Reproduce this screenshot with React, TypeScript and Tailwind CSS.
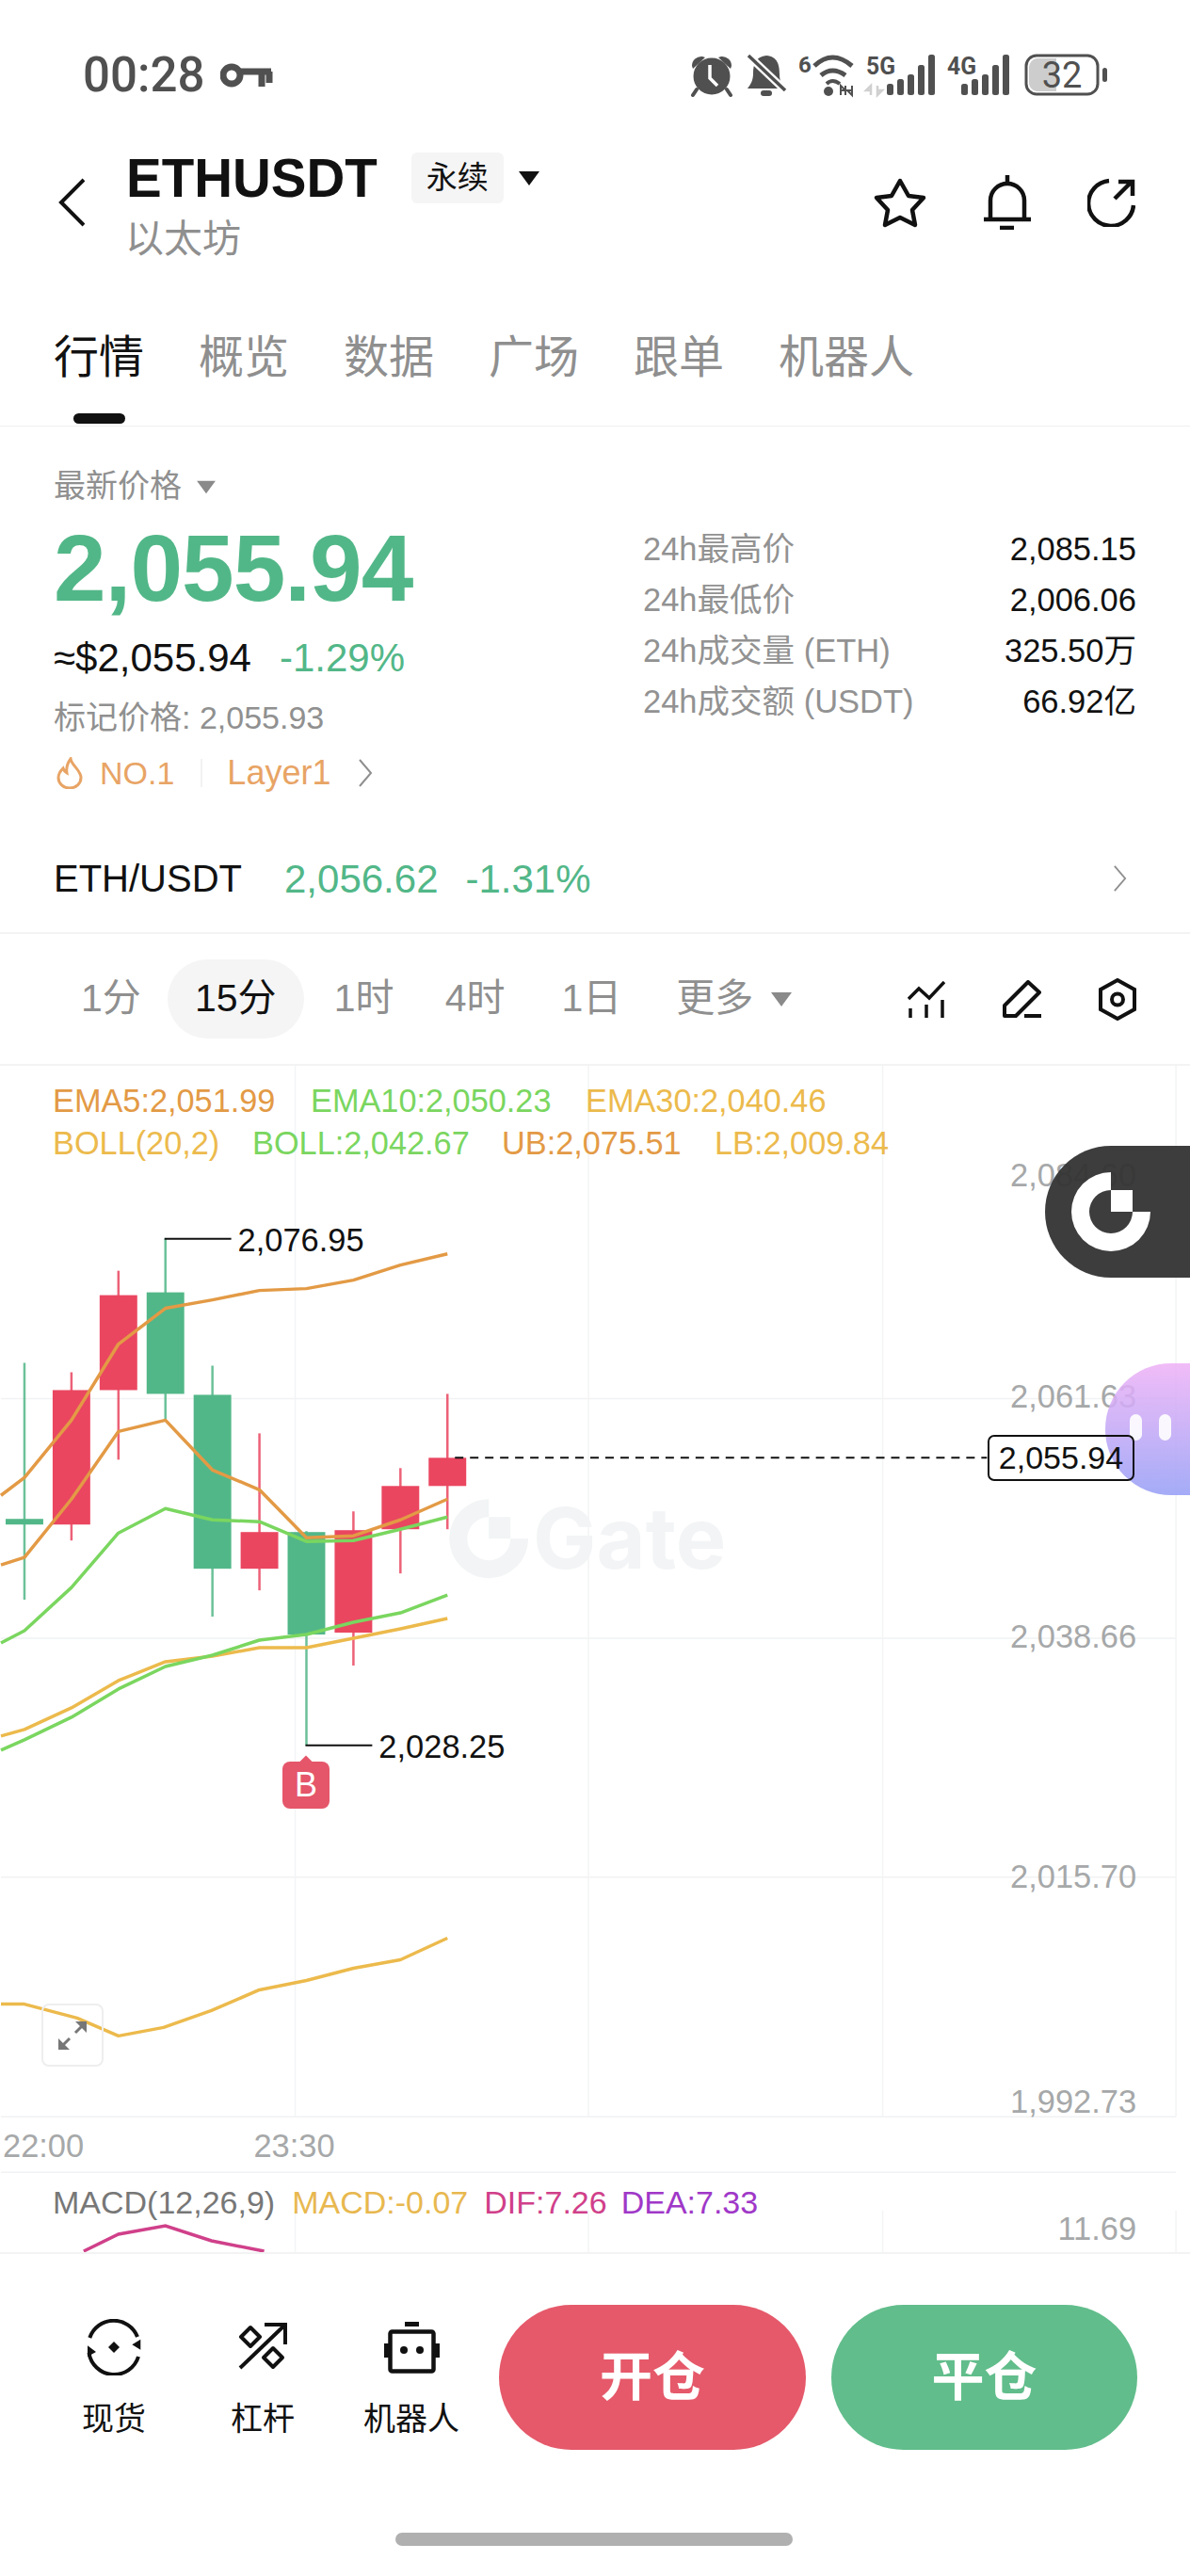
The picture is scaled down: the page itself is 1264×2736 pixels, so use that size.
import React from 'react';

const GREEN = '#52b788';
const RED = '#ea4660';
const ORANGE = '#e39a45';
const YELLOW = '#ecba4c';
const LIME = '#7ad65f';

// [cx, wickTop, wickBottom, bodyTop, bodyBottom, color]
const CANDLES: [number, number, number, number, number, string][] = [
  [25, 1448, 1700, 1614, 1620, GREEN],
  [75, 1458, 1637, 1477, 1620, RED],
  [125, 1350, 1551, 1376, 1477, RED],
  [175, 1316, 1509, 1373, 1481, GREEN],
  [225, 1451, 1718, 1482, 1667, GREEN],
  [275, 1523, 1690, 1628, 1667, RED],
  [325, 1627, 1855, 1628, 1737, GREEN],
  [375, 1606, 1770, 1626, 1735, RED],
  [425, 1560, 1672, 1579, 1625, RED],
  [475, 1481, 1625, 1549, 1579, RED],
];

const LINES: { color: string; points: string }[] = [
  { color: ORANGE, points: '0,1589 25,1570 75,1509 125,1428 175,1390 225,1381 275,1371 325,1369 375,1360 425,1344 475,1332' },
  { color: ORANGE, points: '0,1663 25,1655 75,1593 125,1521 175,1509 225,1562 275,1583 325,1634 375,1632 425,1615 475,1593' },
  { color: LIME, points: '0,1746 25,1733 75,1687 125,1629 175,1603 225,1615 275,1617 325,1638 375,1637 425,1625 475,1612' },
  { color: YELLOW, points: '0,1845 25,1838 75,1815 125,1786 175,1766 225,1760 275,1751 325,1751 375,1741 425,1731 475,1720' },
  { color: LIME, points: '0,1860 25,1849 75,1825 125,1795 175,1771 225,1759 275,1743 325,1737 375,1724 425,1714 475,1695' },
  { color: YELLOW, points: '0,2130 24,2130 81,2145 125,2164 173,2155 224,2137 275,2115 325,2105 375,2092 425,2083 475,2060' },
];

const Y_LABELS: [string, number][] = [
  ['2,084.60', 1248],
  ['2,061.63', 1484],
  ['2,038.66', 1739],
  ['2,015.70', 1994],
  ['1,992.73', 2234],
  ['11.69', 2369],
];

const BAR_SPOTS: [number, number][] = [[0, 90], [11, 85], [22, 80], [33, 70], [44, 59]];

const GateMark = ({ x, y, color }: { x: number; y: number; color: string }) => (
  <g transform={`translate(${x} ${y})`}>
    <path d="M0,-42 A42,42 0 1 0 42,0 H23 A23,23 0 1 1 0,-23 Z" fill={color} />
    <rect x="0" y="-23" width="23" height="23" fill={color} />
  </g>
);

const Chart = () => (
  <svg className="absolute inset-0 w-full h-full" viewBox="0 1132 1264 1262">
    {[1486, 1741, 1995, 2250].map((y) => (
      <line key={y} x1="0" x2="1250" y1={y} y2={y} stroke="#f1f2f3" strokeWidth="1.5" />
    ))}
    {[313, 625, 938, 1250].map((x) => (
      <React.Fragment key={x}>
        <line x1={x} x2={x} y1="1132" y2="2250" stroke="#f3f4f5" strokeWidth="1.5" />
        <line x1={x} x2={x} y1="2350" y2="2394" stroke="#f3f4f5" strokeWidth="1.5" />
      </React.Fragment>
    ))}
    <line x1="0" x2="1250" y1="2309" y2="2309" stroke="#f1f2f3" strokeWidth="1.5" />

    {/* watermark */}
    <GateMark x={519} y={1635} color="#f2f4f5" />
    <text x="566" y="1667" fontSize="90" fontWeight="700" fill="#f2f4f5" fontFamily="Inter">Gate</text>

    {CANDLES.map(([cx, wt, wb, bt, bb, color]) => (
      <g key={cx}>
        <line x1={cx} x2={cx} y1={wt} y2={wb} stroke={color} strokeWidth="2.5" opacity="0.85" />
        <rect x={cx - 20} y={bt} width="40" height={bb - bt} fill={color} />
      </g>
    ))}
    {LINES.map((l, i) => (
      <polyline key={i} points={l.points} fill="none" stroke={l.color} strokeWidth="3.5" strokeLinejoin="round" />
    ))}

    {/* high / low callouts */}
    <line x1="174" x2="245" y1="1316" y2="1316" stroke="#111" strokeWidth="2" />
    <text x="252" y="1329" fontSize="34.5" fill="#111">2,076.95</text>
    <line x1="324" x2="395" y1="1855" y2="1855" stroke="#111" strokeWidth="2" />
    <text x="402" y="1868" fontSize="34.5" fill="#111">2,028.25</text>

    {/* last price dashes */}
    <line x1="483" x2="1049" y1="1549" y2="1549" stroke="#111" strokeWidth="2" strokeDasharray="9 7" />

    {Y_LABELS.map(([t, y]) => (
      <text key={t} x="1208" y={y + 12} textAnchor="end" fontSize="34.5" fill="#a6a8a9">{t}</text>
    ))}
    <text x="2" y="2293" fontSize="34.5" fill="#a6a8a9">22:00</text>
    <text x="312" y="2293" textAnchor="middle" fontSize="34.5" fill="#a6a8a9">23:30</text>

    {/* MACD line, clipped by panel */}
    <polyline points="88,2393 125,2375 175,2366 224,2382 280,2393" fill="none" stroke="#d0408a" strokeWidth="3.5" />
  </svg>
);

const StatusIcons = () => (
  <svg width="450" height="50" viewBox="730 56 450 50" fill="#505050" className="shrink-0">
    {/* alarm */}
    <circle cx="757" cy="82" r="19.5" />
    <path d="M736 71 A10 10 0 0 1 747 61 L750 62 L737 74 Z M778 71 A10 10 0 0 0 767 61 L764 62 L777 74 Z" />
    <path d="M741 96 L737 102 M773 96 L777 102" stroke="#505050" strokeWidth="4" strokeLinecap="round" />
    <path d="M755 70 V84 L763 92" stroke="#fff" strokeWidth="3.5" fill="none" />
    {/* bell off */}
    <path d="M815 60 c12 1 14 10 14 20 c0 8 3 12 5 15 H795 c3 -4 6 -8 6 -16 c0 -10 3 -18 14 -19 Z" />
    <rect x="809" y="97" width="12" height="6" rx="3" />
    <path d="M796 60 L835 97" stroke="#fff" strokeWidth="8" />
    <path d="M796 60 L835 97" stroke="#505050" strokeWidth="3.5" />
    {/* wifi */}
    <text x="849" y="78" fontSize="24" fontWeight="700" fontFamily="Roboto">6</text>
    <path d="M866 71 Q885 53 906 71 M873 81 Q885 71 899 81" stroke="#505050" strokeWidth="5" fill="none" />
    <path d="M879 90 Q885 84 893 90" stroke="#505050" strokeWidth="4" fill="none" />
    <circle cx="881" cy="98" r="5" />
    <path d="M894 102 V92 L899 97 H895 M906 92 V102 L901 97 H905 M899 92 V102" stroke="#505050" strokeWidth="2" fill="none" />
    {/* 5G */}
    <text x="921" y="80" fontSize="26" fontWeight="700" fontFamily="Roboto" textLength="31" lengthAdjust="spacingAndGlyphs">5G</text>
    <path d="M926 102 V92 L921 97 H925 M933 92 V102 L938 97 H934" stroke="#d0d0d0" strokeWidth="2.5" fill="none" />
    {BAR_SPOTS.map(([dx, y]) => (
      <rect key={dx} x={943 + dx} y={y} width="7" height={102 - y} rx="2.5" />
    ))}
    {/* 4G */}
    <text x="1007" y="80" fontSize="26" fontWeight="700" fontFamily="Roboto" textLength="31" lengthAdjust="spacingAndGlyphs">4G</text>
    {BAR_SPOTS.map(([dx, y]) => (
      <rect key={dx} x={1022 + dx} y={y} width="7" height={102 - y} rx="2.5" />
    ))}
    {/* battery */}
    <rect x="1091" y="60" width="76" height="41" rx="11" fill="#fff" stroke="#505050" strokeWidth="3" />
    <path d="M1094 72 A10 10 0 0 1 1102 63 H1123 V98 H1102 A10 10 0 0 1 1094 90 Z" fill="#cdcdcd" />
    <text x="1129" y="94" fontSize="38" textAnchor="middle" fontFamily="Roboto" fill="#505050">32</text>
    <rect x="1172" y="73" width="5" height="15" rx="2.5" />
  </svg>
);

const StarIcon = () => (
  <svg width="58" height="55" viewBox="0 0 58 55" fill="none" stroke="#111" strokeWidth="4.5" strokeLinejoin="round">
    <path d="M29 4 L38 20 L54 22 L42 35 L45 51 L29 43 L13 51 L16 35 L4 22 L20 20 Z" />
  </svg>
);
const BellIcon = () => (
  <svg width="50" height="58" viewBox="0 0 50 58" fill="none" stroke="#111" strokeWidth="4.5">
    <path d="M7 47 V27 A18 18 0 0 1 43 27 V47" />
    <path d="M25 0 V9" />
    <path d="M0 47 H50" />
    <path d="M17 56 H32" />
  </svg>
);
const ShareIcon = () => (
  <svg width="51" height="52" viewBox="0 0 51 52" fill="none" stroke="#111" strokeWidth="4.5">
    <path d="M23 3 A24 24 0 1 0 49 29" />
    <path d="M29 22 L47 4 M33 4 H48 V19" />
  </svg>
);

const Triangle = ({ className }: { className: string }) => (
  <span className={`inline-block w-0 h-0 border-l-[11px] border-r-[11px] border-t-[15px] border-l-transparent border-r-transparent ${className}`} />
);

const Chevron = ({ w, h, color }: { w: number; h: number; color: string }) => (
  <svg width={w} height={h} viewBox="0 0 16 32" fill="none" stroke={color} strokeWidth="2">
    <path d="M2 2 L14 16 L2 30" />
  </svg>
);

const Stat = ({ label, value }: { label: string; value: string }) => (
  <div className="flex justify-between items-center h-[54px] text-[34.5px]">
    <span className="text-[#929292]">{label}</span>
    <span className="text-[#111]">{value}</span>
  </div>
);

const BottomIcon = ({ label, children }: { label: string; children: React.ReactNode }) => (
  <div className="w-[158px] flex flex-col items-center">
    <div className="h-[70px] mt-[10px] flex items-center justify-center">{children}</div>
    <span className="mt-[18px] text-[34px] leading-[46px] text-[#111]">{label}</span>
  </div>
);

export default function App() {
  return (
    <div className="w-[1264px] h-[2736px] bg-white overflow-hidden flex flex-col text-[#111] [font-family:'Liberation_Sans','Noto_Sans_CJK_SC',sans-serif]">
      {/* Status bar */}
      <div className="h-[160px] shrink-0 flex items-center pl-[88px] pr-[85px] justify-between">
        <div className="flex items-center text-[#505050]">
          <span className="text-[51px] font-medium [font-family:Roboto,sans-serif]">00:28</span>
          <svg width="56" height="32" viewBox="0 0 56 32" fill="none" stroke="#505050" strokeWidth="7" className="ml-[17px]">
            <circle cx="12" cy="16" r="9" />
            <path d="M21 12 H54 M44 12 V28 M52 12 V24" />
          </svg>
        </div>
        <StatusIcons />
      </div>

      {/* Header */}
      <div className="h-[130px] shrink-0 flex pl-[62px] pr-[58px]">
        <svg width="28" height="52" viewBox="0 0 28 52" fill="none" stroke="#111" strokeWidth="4" className="mt-[29px] shrink-0">
          <path d="M27 2 L3 26 L27 50" />
        </svg>
        <div className="ml-[44px] flex flex-col">
          <div className="flex items-start pt-[2px]">
            <span className="text-[56.5px] leading-[56px] font-bold">ETHUSDT</span>
            <span className="ml-[36px] h-[54px] w-[98px] bg-[#f5f5f5] rounded-[6px] flex items-center justify-center text-[33px]">永续</span>
            <Triangle className="ml-[16px] mt-[20px] border-t-[#111]" />
          </div>
          <span className="mt-[10px] -ml-[1px] text-[41px] leading-[52px] text-[#8f8f8f]">以太坊</span>
        </div>
        <div className="ml-auto flex items-center gap-[60px] h-[110px]">
          <StarIcon />
          <BellIcon />
          <ShareIcon />
        </div>
      </div>

      {/* Tabs */}
      <div className="h-[163px] shrink-0 border-b border-[#f0f0f0] relative flex gap-[58px] pl-[57px] pt-[57px] text-[48px] leading-[66px] text-[#8f8f8f]">
        <span className="text-[#111]">行情</span>
        <span>概览</span>
        <span>数据</span>
        <span>广场</span>
        <span>跟单</span>
        <span>机器人</span>
        <span className="absolute left-[78px] top-[149px] w-[55px] h-[11px] rounded-full bg-[#111]" />
      </div>

      {/* Price */}
      <div className="h-[539px] shrink-0 border-b-2 border-[#f3f3f3] pl-[57px] pr-[57px] relative">
        <div className="flex justify-between items-start">
          <div className="flex flex-col">
            <div className="mt-[43px] h-[40px] flex items-center text-[34px] text-[#909090]">
              最新价格
              <Triangle className="ml-[15px] mt-[2px] border-t-[#8a8a8a] scale-90" />
            </div>
            <div className="mt-[17px] h-[100px] flex items-center text-[100px] leading-none font-bold tracking-[-0.01em] text-[#52b788]">2,055.94</div>
            <div className="mt-[20px] h-[50px] flex items-center text-[42px]">
              <span>≈$2,055.94</span>
              <span className="ml-[30px] text-[#52b788]">-1.29%</span>
            </div>
            <div className="mt-[17px] h-[44px] flex items-center text-[34px] text-[#909090]">标记价格: 2,055.93</div>
            <div className="mt-[15px] h-[44px] flex items-center text-[34px] text-[#e8a465]">
              <svg width="28" height="34" viewBox="0 0 28 34" fill="none" stroke="#e8a465" strokeWidth="3" className="ml-[3px]">
                <path d="M15 2 C16 9 26 14 26 22 A12 11 0 0 1 2 22 C2 17 5 14 7 12 C8 15 9 16 11 17 C10 11 12 6 15 2 Z" />
              </svg>
              <span className="ml-[18px]">NO.1</span>
              <span className="ml-[28px] w-[2px] h-[30px] bg-[#f2f2f2]" />
              <span className="ml-[26px] text-[36px]">Layer1</span>
              <span className="ml-[29px]"><Chevron w={16} h={32} color="#8f8f8f" /></span>
            </div>
          </div>
          <div className="w-[524px] mt-[104px] flex flex-col">
            <Stat label="24h最高价" value="2,085.15" />
            <Stat label="24h最低价" value="2,006.06" />
            <Stat label="24h成交量 (ETH)" value="325.50万" />
            <Stat label="24h成交额 (USDT)" value="66.92亿" />
          </div>
        </div>
        <div className="mt-[60px] h-[60px] flex items-center text-[42px]">
          <span className="text-[40px]">ETH/USDT</span>
          <span className="ml-[45px] text-[#52b788]">2,056.62</span>
          <span className="ml-[29px] text-[#52b788]">-1.31%</span>
          <span className="ml-auto mr-[10px]"><Chevron w={15} h={32} color="#8f8f8f" /></span>
        </div>
      </div>

      {/* Timeframes */}
      <div className="h-[140px] shrink-0 border-b-2 border-[#f3f3f3] flex items-center pl-[86px] pr-[57px] text-[41px] text-[#8f8f8f]">
        <span>1分</span>
        <span className="ml-[28px] w-[145px] h-[84px] rounded-[42px] bg-[#f5f5f5] text-[#111] flex items-center justify-center">15分</span>
        <span className="ml-[32px]">1时</span>
        <span className="ml-[54px]">4时</span>
        <span className="ml-[60px]">1日</span>
        <span className="ml-[58px]">更多</span>
        <Triangle className="ml-[19px] border-t-[#8a8a8a]" />
        <div className="ml-auto flex items-center gap-[61px]">
          <svg width="40" height="39" viewBox="0 0 40 39" fill="none" stroke="#111" strokeWidth="3.5">
            <path d="M1 19 L12 8 L23 18 L39 1" />
            <path d="M3 29 V39 M20 25 V39 M37 20 V39" />
          </svg>
          <svg width="41" height="41" viewBox="0 0 41 41" fill="none" stroke="#111" strokeWidth="4" strokeLinejoin="round">
            <path d="M2 27 L27 2 L39 13 L14 38 H2 Z" />
            <path d="M23 38 H41" />
          </svg>
          <svg width="40" height="45" viewBox="0 0 40 45" fill="none" stroke="#111" strokeWidth="4">
            <path d="M20 2 L38 12 V33 L20 43 L2 33 V12 Z" />
            <circle cx="20" cy="22.5" r="6" />
          </svg>
        </div>
      </div>

      {/* Chart */}
      <div className="h-[1262px] shrink-0 relative overflow-hidden border-b-2 border-[#f3f3f3]">
        <Chart />
        <div className="relative flex flex-col pl-[56px] pt-[15px] text-[34.3px] leading-[45px]">
          <div className="flex text-[#e39a45]">
            <span className="w-[274px]">EMA5:2,051.99</span>
            <span className="w-[292px] text-[#7ad65f]">EMA10:2,050.23</span>
            <span className="text-[#ecba4c]">EMA30:2,040.46</span>
          </div>
          <div className="flex">
            <span className="w-[212px] text-[#ecba4c]">BOLL(20,2)</span>
            <span className="w-[265px] text-[#7ad65f]">BOLL:2,042.67</span>
            <span className="w-[226px] text-[#e39a45]">UB:2,075.51</span>
            <span className="text-[#ecba4c]">LB:2,009.84</span>
          </div>
        </div>

        {/* floating gate button */}
        <div className="absolute left-[1110px] top-[85px] w-[154px] h-[140px] bg-[#333333]/95 rounded-l-[70px] flex items-center justify-start pl-[28px]">
          <svg width="84" height="84" viewBox="-42 -42 84 84">
            <GateMark x={0} y={0} color="#fff" />
          </svg>
        </div>
        {/* floating assistant */}
        <div className="absolute left-[1174px] top-[316px] w-[90px] h-[140px] rounded-l-[70px] bg-gradient-to-b from-[#eeb0f6]/85 to-[#9aa2f6]/90 flex items-start gap-[18px] pl-[26px] pt-[54px]">
          <span className="w-[13px] h-[28px] rounded-full bg-white/90" />
          <span className="w-[13px] h-[28px] rounded-full bg-white/90" />
        </div>
        {/* last price tag */}
        <div className="absolute left-[1049px] top-[392px] w-[156px] h-[49px] rounded-[7px] border-2 border-[#111] flex items-center justify-center text-[34px]">2,055.94</div>

        {/* buy marker */}
        <div className="absolute left-[300px] top-[739px] w-[50px] h-[50px] rounded-[8px] bg-[#e5566a] flex items-center justify-center text-[36px] font-medium text-white">
          <span className="absolute -top-[4px] left-[19px] w-[12px] h-[12px] rotate-45 bg-[#e5566a]" />
          <span className="relative">B</span>
        </div>

        {/* expand */}
        <div className="absolute left-[44px] top-[996px] w-[66px] h-[67px] rounded-[8px] border-2 border-[#eeeeee] flex items-center justify-center">
          <svg width="34" height="34" viewBox="0 0 34 34" fill="#777" stroke="#777" strokeWidth="3">
            <path d="M14 20 L4 30 M20 14 L30 4" fill="none" />
            <path d="M2 20 L2 32 L14 32 Z M32 14 L32 2 L20 2 Z" strokeWidth="0" />
          </svg>
        </div>

        {/* MACD legend */}
        <div className="absolute left-[56px] top-[1185px] flex text-[34px] leading-[44px]">
          <span className="text-[#777]">MACD(12,26,9)</span>
          <span className="ml-[18px] text-[#e8b84f]">MACD:-0.07</span>
          <span className="ml-[17px] text-[#d0408a]">DIF:7.26</span>
          <span className="ml-[15px] text-[#a038c8]">DEA:7.33</span>
        </div>
      </div>

      {/* Bottom bar */}
      <div className="flex-1 relative flex items-start pl-[42px] pr-[56px] pt-[54px]">
        <div className="flex">
          <BottomIcon label="现货">
            <svg width="60" height="60" viewBox="0 0 60 60" fill="none" stroke="#111" strokeWidth="4">
              <path d="M4.3 20 A27 27 0 0 1 55 19" />
              <path d="M56 40 A27 27 0 0 1 3.5 36" />
              <path d="M58.3 21.7 L58.3 32.7 L49.3 27.3 Z M2 28.3 L2 40 L11 35 Z" fill="#111" stroke="none" />
              <path d="M30 24 L36 30 L30 36 L24 30 Z" fill="#111" stroke="none" />
            </svg>
          </BottomIcon>
          <BottomIcon label="杠杆">
            <svg width="52" height="52" viewBox="0 0 52 52" fill="none" stroke="#111" strokeWidth="4">
              <path d="M2 48 L50 2" />
              <path d="M28 2 H50 V23" />
              <path d="M13 5 L23 15 L13 25 L3 15 Z" strokeLinejoin="round" />
              <path d="M37 27 L47 37 L37 47 L27 37 Z" strokeLinejoin="round" />
            </svg>
          </BottomIcon>
          <BottomIcon label="机器人">
            <svg width="59" height="55" viewBox="0 0 59 55" fill="none" stroke="#111" strokeWidth="4.5">
              <rect x="6.5" y="10.5" width="46" height="42" rx="2" />
              <rect x="22" y="0" width="15" height="5" fill="#111" stroke="none" />
              <rect x="0" y="23" width="5" height="15" fill="#111" stroke="none" />
              <rect x="54" y="23" width="5" height="15" fill="#111" stroke="none" />
              <circle cx="21" cy="30" r="4" fill="#111" stroke="none" />
              <circle cx="38" cy="30" r="4" fill="#111" stroke="none" />
            </svg>
          </BottomIcon>
        </div>
        <div className="ml-[14px] w-[326px] h-[154px] rounded-[77px] bg-[#e5596a] flex items-center justify-center text-[56px] font-bold text-white">开仓</div>
        <div className="ml-[27px] w-[325px] h-[154px] rounded-[77px] bg-[#61bd8b] flex items-center justify-center text-[56px] font-bold text-white">平仓</div>
        <span className="absolute left-[420px] top-[296px] w-[422px] h-[14px] rounded-full bg-[#b0b0b0]" />
      </div>
    </div>
  );
}
